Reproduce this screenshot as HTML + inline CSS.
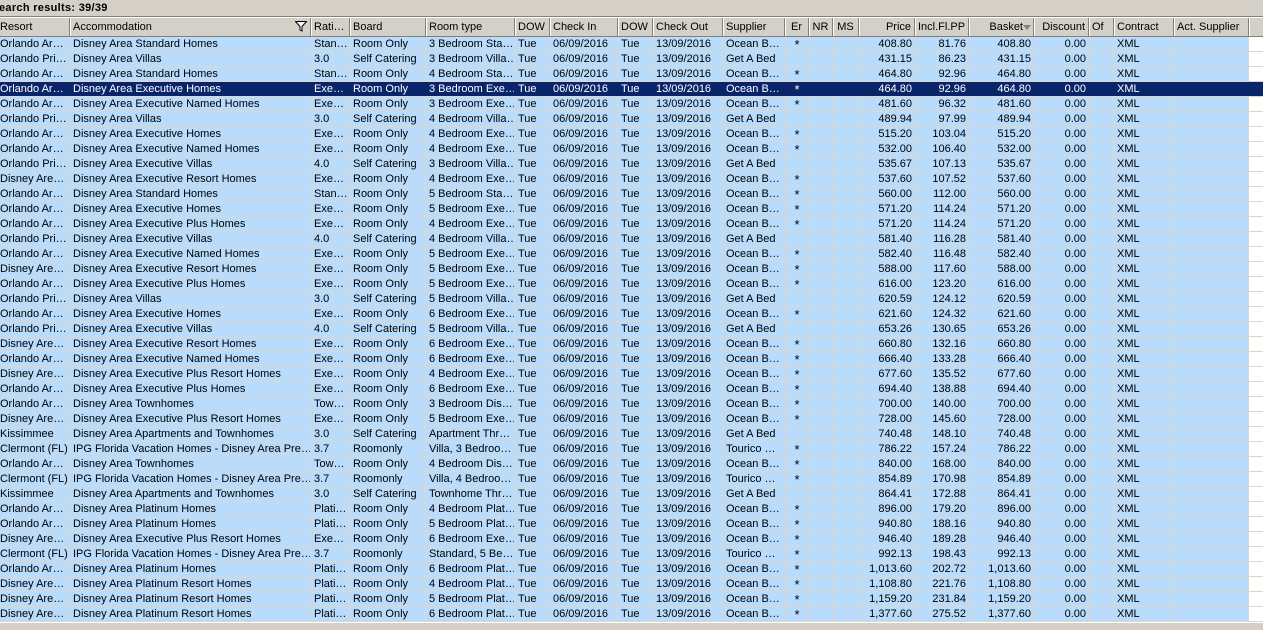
<!DOCTYPE html>
<html><head><meta charset="utf-8"><style>
*{margin:0;padding:0;box-sizing:border-box}
body{width:1263px;height:630px;background:#d4d0c8;font-family:"Liberation Sans","DejaVu Sans",sans-serif;font-size:11px;overflow:hidden;position:relative;color:#000}
.title{position:absolute;left:-1px;top:2px;font-weight:bold;font-size:11px;letter-spacing:0.3px}
.hline{position:absolute;left:0;top:16px;width:1263px;height:1px;background:#808080}
.hdr{position:absolute;left:0;top:17px;width:1263px;height:20px;background:#d4d0c8;border-top:1px solid #fff;border-bottom:1px solid #808080;display:flex}
.hdr div{height:18px;line-height:19px;border-right:1px solid #808080;box-shadow:inset 1px 0 0 #fff;padding:0 3px;white-space:nowrap;overflow:hidden;flex:none}
.grid{position:absolute;left:0;top:37px;width:1263px;background:#fff}
.r{display:flex;height:15px;border-bottom:1px solid #ddd6cc}
.r div{flex:none;height:14px;line-height:15px;border-right:1px solid #ddd6cc;padding:0 2px 0 3px;white-space:nowrap;overflow:hidden;background:#b9dcfc}
.r div.e{background:#fff;border-right:none;width:14px}
.r.s div{background:#0a246a;color:#fff;border-right-color:#0a246a}
.n{text-align:right}
.c{text-align:center;font-size:13px}
.bot{position:absolute;left:0;top:622px;width:1263px;height:1px;background:#fff}
</style></head><body>
<div class="title">earch results: 39/39</div>
<div class="hline"></div>
<div class="hdr">
<div style="width:70px;padding-left:0;box-shadow:none">Resort</div>
<div style="width:241px;position:relative">Accommodation<svg style="position:absolute;right:3px;top:3px" width="12" height="11" viewBox="0 0 12 11"><path d="M0.5 0.5H11.5L7 5.5V10L5 9V5.5Z" fill="#fff" stroke="#000" stroke-width="1"/></svg></div>
<div style="width:39px">Rati…</div>
<div style="width:76px">Board</div>
<div style="width:89px">Room type</div>
<div style="width:35px">DOW</div>
<div style="width:68px">Check In</div>
<div style="width:35px">DOW</div>
<div style="width:70px">Check Out</div>
<div style="width:62px">Supplier</div>
<div style="width:24px;text-align:center">Er</div>
<div style="width:24px;text-align:center">NR</div>
<div style="width:26px;text-align:center">MS</div>
<div style="width:56px;text-align:right">Price</div>
<div style="width:54px;text-align:right">Incl.Fl.PP</div>
<div style="width:65px;text-align:right;padding-right:10px;position:relative">Basket<span style="position:absolute;right:2px;top:7px;width:0;height:0;border-left:4px solid transparent;border-right:4px solid transparent;border-top:5px solid #808080"></span></div>
<div style="width:55px;text-align:right">Discount</div>
<div style="width:25px">Of</div>
<div style="width:60px">Contract</div>
<div style="width:75px">Act. Supplier</div>
<div style="width:14px;border-right:none"></div>
</div>
<div class="grid" id="g">
<div class="r"><div style="width:70px;padding-left:0">Orlando Ar…</div><div style="width:241px">Disney Area Standard Homes</div><div style="width:39px">Stan…</div><div style="width:76px">Room Only</div><div style="width:89px">3 Bedroom Sta…</div><div style="width:35px">Tue</div><div style="width:68px">06/09/2016</div><div style="width:35px">Tue</div><div style="width:70px">13/09/2016</div><div style="width:62px">Ocean B…</div><div class="c" style="width:24px">*</div><div style="width:24px"></div><div style="width:26px"></div><div class="n" style="width:56px">408.80</div><div class="n" style="width:54px">81.76</div><div class="n" style="width:65px">408.80</div><div class="n" style="width:55px">0.00</div><div style="width:25px"></div><div style="width:60px">XML</div><div style="width:75px"></div><div class="e"></div></div>
<div class="r"><div style="width:70px;padding-left:0">Orlando Pri…</div><div style="width:241px">Disney Area Villas</div><div style="width:39px">3.0</div><div style="width:76px">Self Catering</div><div style="width:89px">3 Bedroom Villa…</div><div style="width:35px">Tue</div><div style="width:68px">06/09/2016</div><div style="width:35px">Tue</div><div style="width:70px">13/09/2016</div><div style="width:62px">Get A Bed</div><div class="c" style="width:24px"></div><div style="width:24px"></div><div style="width:26px"></div><div class="n" style="width:56px">431.15</div><div class="n" style="width:54px">86.23</div><div class="n" style="width:65px">431.15</div><div class="n" style="width:55px">0.00</div><div style="width:25px"></div><div style="width:60px">XML</div><div style="width:75px"></div><div class="e"></div></div>
<div class="r"><div style="width:70px;padding-left:0">Orlando Ar…</div><div style="width:241px">Disney Area Standard Homes</div><div style="width:39px">Stan…</div><div style="width:76px">Room Only</div><div style="width:89px">4 Bedroom Sta…</div><div style="width:35px">Tue</div><div style="width:68px">06/09/2016</div><div style="width:35px">Tue</div><div style="width:70px">13/09/2016</div><div style="width:62px">Ocean B…</div><div class="c" style="width:24px">*</div><div style="width:24px"></div><div style="width:26px"></div><div class="n" style="width:56px">464.80</div><div class="n" style="width:54px">92.96</div><div class="n" style="width:65px">464.80</div><div class="n" style="width:55px">0.00</div><div style="width:25px"></div><div style="width:60px">XML</div><div style="width:75px"></div><div class="e"></div></div>
<div class="r s"><div style="width:70px;padding-left:0">Orlando Ar…</div><div style="width:241px">Disney Area Executive Homes</div><div style="width:39px">Exe…</div><div style="width:76px">Room Only</div><div style="width:89px">3 Bedroom Exe…</div><div style="width:35px">Tue</div><div style="width:68px">06/09/2016</div><div style="width:35px">Tue</div><div style="width:70px">13/09/2016</div><div style="width:62px">Ocean B…</div><div class="c" style="width:24px">*</div><div style="width:24px"></div><div style="width:26px"></div><div class="n" style="width:56px">464.80</div><div class="n" style="width:54px">92.96</div><div class="n" style="width:65px">464.80</div><div class="n" style="width:55px">0.00</div><div style="width:25px"></div><div style="width:60px">XML</div><div style="width:75px"></div><div class="e" style="background:#0a246a"></div></div>
<div class="r"><div style="width:70px;padding-left:0">Orlando Ar…</div><div style="width:241px">Disney Area Executive Named Homes</div><div style="width:39px">Exe…</div><div style="width:76px">Room Only</div><div style="width:89px">3 Bedroom Exe…</div><div style="width:35px">Tue</div><div style="width:68px">06/09/2016</div><div style="width:35px">Tue</div><div style="width:70px">13/09/2016</div><div style="width:62px">Ocean B…</div><div class="c" style="width:24px">*</div><div style="width:24px"></div><div style="width:26px"></div><div class="n" style="width:56px">481.60</div><div class="n" style="width:54px">96.32</div><div class="n" style="width:65px">481.60</div><div class="n" style="width:55px">0.00</div><div style="width:25px"></div><div style="width:60px">XML</div><div style="width:75px"></div><div class="e"></div></div>
<div class="r"><div style="width:70px;padding-left:0">Orlando Pri…</div><div style="width:241px">Disney Area Villas</div><div style="width:39px">3.0</div><div style="width:76px">Self Catering</div><div style="width:89px">4 Bedroom Villa…</div><div style="width:35px">Tue</div><div style="width:68px">06/09/2016</div><div style="width:35px">Tue</div><div style="width:70px">13/09/2016</div><div style="width:62px">Get A Bed</div><div class="c" style="width:24px"></div><div style="width:24px"></div><div style="width:26px"></div><div class="n" style="width:56px">489.94</div><div class="n" style="width:54px">97.99</div><div class="n" style="width:65px">489.94</div><div class="n" style="width:55px">0.00</div><div style="width:25px"></div><div style="width:60px">XML</div><div style="width:75px"></div><div class="e"></div></div>
<div class="r"><div style="width:70px;padding-left:0">Orlando Ar…</div><div style="width:241px">Disney Area Executive Homes</div><div style="width:39px">Exe…</div><div style="width:76px">Room Only</div><div style="width:89px">4 Bedroom Exe…</div><div style="width:35px">Tue</div><div style="width:68px">06/09/2016</div><div style="width:35px">Tue</div><div style="width:70px">13/09/2016</div><div style="width:62px">Ocean B…</div><div class="c" style="width:24px">*</div><div style="width:24px"></div><div style="width:26px"></div><div class="n" style="width:56px">515.20</div><div class="n" style="width:54px">103.04</div><div class="n" style="width:65px">515.20</div><div class="n" style="width:55px">0.00</div><div style="width:25px"></div><div style="width:60px">XML</div><div style="width:75px"></div><div class="e"></div></div>
<div class="r"><div style="width:70px;padding-left:0">Orlando Ar…</div><div style="width:241px">Disney Area Executive Named Homes</div><div style="width:39px">Exe…</div><div style="width:76px">Room Only</div><div style="width:89px">4 Bedroom Exe…</div><div style="width:35px">Tue</div><div style="width:68px">06/09/2016</div><div style="width:35px">Tue</div><div style="width:70px">13/09/2016</div><div style="width:62px">Ocean B…</div><div class="c" style="width:24px">*</div><div style="width:24px"></div><div style="width:26px"></div><div class="n" style="width:56px">532.00</div><div class="n" style="width:54px">106.40</div><div class="n" style="width:65px">532.00</div><div class="n" style="width:55px">0.00</div><div style="width:25px"></div><div style="width:60px">XML</div><div style="width:75px"></div><div class="e"></div></div>
<div class="r"><div style="width:70px;padding-left:0">Orlando Pri…</div><div style="width:241px">Disney Area Executive Villas</div><div style="width:39px">4.0</div><div style="width:76px">Self Catering</div><div style="width:89px">3 Bedroom Villa…</div><div style="width:35px">Tue</div><div style="width:68px">06/09/2016</div><div style="width:35px">Tue</div><div style="width:70px">13/09/2016</div><div style="width:62px">Get A Bed</div><div class="c" style="width:24px"></div><div style="width:24px"></div><div style="width:26px"></div><div class="n" style="width:56px">535.67</div><div class="n" style="width:54px">107.13</div><div class="n" style="width:65px">535.67</div><div class="n" style="width:55px">0.00</div><div style="width:25px"></div><div style="width:60px">XML</div><div style="width:75px"></div><div class="e"></div></div>
<div class="r"><div style="width:70px;padding-left:0">Disney Are…</div><div style="width:241px">Disney Area Executive Resort Homes</div><div style="width:39px">Exe…</div><div style="width:76px">Room Only</div><div style="width:89px">4 Bedroom Exe…</div><div style="width:35px">Tue</div><div style="width:68px">06/09/2016</div><div style="width:35px">Tue</div><div style="width:70px">13/09/2016</div><div style="width:62px">Ocean B…</div><div class="c" style="width:24px">*</div><div style="width:24px"></div><div style="width:26px"></div><div class="n" style="width:56px">537.60</div><div class="n" style="width:54px">107.52</div><div class="n" style="width:65px">537.60</div><div class="n" style="width:55px">0.00</div><div style="width:25px"></div><div style="width:60px">XML</div><div style="width:75px"></div><div class="e"></div></div>
<div class="r"><div style="width:70px;padding-left:0">Orlando Ar…</div><div style="width:241px">Disney Area Standard Homes</div><div style="width:39px">Stan…</div><div style="width:76px">Room Only</div><div style="width:89px">5 Bedroom Sta…</div><div style="width:35px">Tue</div><div style="width:68px">06/09/2016</div><div style="width:35px">Tue</div><div style="width:70px">13/09/2016</div><div style="width:62px">Ocean B…</div><div class="c" style="width:24px">*</div><div style="width:24px"></div><div style="width:26px"></div><div class="n" style="width:56px">560.00</div><div class="n" style="width:54px">112.00</div><div class="n" style="width:65px">560.00</div><div class="n" style="width:55px">0.00</div><div style="width:25px"></div><div style="width:60px">XML</div><div style="width:75px"></div><div class="e"></div></div>
<div class="r"><div style="width:70px;padding-left:0">Orlando Ar…</div><div style="width:241px">Disney Area Executive Homes</div><div style="width:39px">Exe…</div><div style="width:76px">Room Only</div><div style="width:89px">5 Bedroom Exe…</div><div style="width:35px">Tue</div><div style="width:68px">06/09/2016</div><div style="width:35px">Tue</div><div style="width:70px">13/09/2016</div><div style="width:62px">Ocean B…</div><div class="c" style="width:24px">*</div><div style="width:24px"></div><div style="width:26px"></div><div class="n" style="width:56px">571.20</div><div class="n" style="width:54px">114.24</div><div class="n" style="width:65px">571.20</div><div class="n" style="width:55px">0.00</div><div style="width:25px"></div><div style="width:60px">XML</div><div style="width:75px"></div><div class="e"></div></div>
<div class="r"><div style="width:70px;padding-left:0">Orlando Ar…</div><div style="width:241px">Disney Area Executive Plus Homes</div><div style="width:39px">Exe…</div><div style="width:76px">Room Only</div><div style="width:89px">4 Bedroom Exe…</div><div style="width:35px">Tue</div><div style="width:68px">06/09/2016</div><div style="width:35px">Tue</div><div style="width:70px">13/09/2016</div><div style="width:62px">Ocean B…</div><div class="c" style="width:24px">*</div><div style="width:24px"></div><div style="width:26px"></div><div class="n" style="width:56px">571.20</div><div class="n" style="width:54px">114.24</div><div class="n" style="width:65px">571.20</div><div class="n" style="width:55px">0.00</div><div style="width:25px"></div><div style="width:60px">XML</div><div style="width:75px"></div><div class="e"></div></div>
<div class="r"><div style="width:70px;padding-left:0">Orlando Pri…</div><div style="width:241px">Disney Area Executive Villas</div><div style="width:39px">4.0</div><div style="width:76px">Self Catering</div><div style="width:89px">4 Bedroom Villa…</div><div style="width:35px">Tue</div><div style="width:68px">06/09/2016</div><div style="width:35px">Tue</div><div style="width:70px">13/09/2016</div><div style="width:62px">Get A Bed</div><div class="c" style="width:24px"></div><div style="width:24px"></div><div style="width:26px"></div><div class="n" style="width:56px">581.40</div><div class="n" style="width:54px">116.28</div><div class="n" style="width:65px">581.40</div><div class="n" style="width:55px">0.00</div><div style="width:25px"></div><div style="width:60px">XML</div><div style="width:75px"></div><div class="e"></div></div>
<div class="r"><div style="width:70px;padding-left:0">Orlando Ar…</div><div style="width:241px">Disney Area Executive Named Homes</div><div style="width:39px">Exe…</div><div style="width:76px">Room Only</div><div style="width:89px">5 Bedroom Exe…</div><div style="width:35px">Tue</div><div style="width:68px">06/09/2016</div><div style="width:35px">Tue</div><div style="width:70px">13/09/2016</div><div style="width:62px">Ocean B…</div><div class="c" style="width:24px">*</div><div style="width:24px"></div><div style="width:26px"></div><div class="n" style="width:56px">582.40</div><div class="n" style="width:54px">116.48</div><div class="n" style="width:65px">582.40</div><div class="n" style="width:55px">0.00</div><div style="width:25px"></div><div style="width:60px">XML</div><div style="width:75px"></div><div class="e"></div></div>
<div class="r"><div style="width:70px;padding-left:0">Disney Are…</div><div style="width:241px">Disney Area Executive Resort Homes</div><div style="width:39px">Exe…</div><div style="width:76px">Room Only</div><div style="width:89px">5 Bedroom Exe…</div><div style="width:35px">Tue</div><div style="width:68px">06/09/2016</div><div style="width:35px">Tue</div><div style="width:70px">13/09/2016</div><div style="width:62px">Ocean B…</div><div class="c" style="width:24px">*</div><div style="width:24px"></div><div style="width:26px"></div><div class="n" style="width:56px">588.00</div><div class="n" style="width:54px">117.60</div><div class="n" style="width:65px">588.00</div><div class="n" style="width:55px">0.00</div><div style="width:25px"></div><div style="width:60px">XML</div><div style="width:75px"></div><div class="e"></div></div>
<div class="r"><div style="width:70px;padding-left:0">Orlando Ar…</div><div style="width:241px">Disney Area Executive Plus Homes</div><div style="width:39px">Exe…</div><div style="width:76px">Room Only</div><div style="width:89px">5 Bedroom Exe…</div><div style="width:35px">Tue</div><div style="width:68px">06/09/2016</div><div style="width:35px">Tue</div><div style="width:70px">13/09/2016</div><div style="width:62px">Ocean B…</div><div class="c" style="width:24px">*</div><div style="width:24px"></div><div style="width:26px"></div><div class="n" style="width:56px">616.00</div><div class="n" style="width:54px">123.20</div><div class="n" style="width:65px">616.00</div><div class="n" style="width:55px">0.00</div><div style="width:25px"></div><div style="width:60px">XML</div><div style="width:75px"></div><div class="e"></div></div>
<div class="r"><div style="width:70px;padding-left:0">Orlando Pri…</div><div style="width:241px">Disney Area Villas</div><div style="width:39px">3.0</div><div style="width:76px">Self Catering</div><div style="width:89px">5 Bedroom Villa…</div><div style="width:35px">Tue</div><div style="width:68px">06/09/2016</div><div style="width:35px">Tue</div><div style="width:70px">13/09/2016</div><div style="width:62px">Get A Bed</div><div class="c" style="width:24px"></div><div style="width:24px"></div><div style="width:26px"></div><div class="n" style="width:56px">620.59</div><div class="n" style="width:54px">124.12</div><div class="n" style="width:65px">620.59</div><div class="n" style="width:55px">0.00</div><div style="width:25px"></div><div style="width:60px">XML</div><div style="width:75px"></div><div class="e"></div></div>
<div class="r"><div style="width:70px;padding-left:0">Orlando Ar…</div><div style="width:241px">Disney Area Executive Homes</div><div style="width:39px">Exe…</div><div style="width:76px">Room Only</div><div style="width:89px">6 Bedroom Exe…</div><div style="width:35px">Tue</div><div style="width:68px">06/09/2016</div><div style="width:35px">Tue</div><div style="width:70px">13/09/2016</div><div style="width:62px">Ocean B…</div><div class="c" style="width:24px">*</div><div style="width:24px"></div><div style="width:26px"></div><div class="n" style="width:56px">621.60</div><div class="n" style="width:54px">124.32</div><div class="n" style="width:65px">621.60</div><div class="n" style="width:55px">0.00</div><div style="width:25px"></div><div style="width:60px">XML</div><div style="width:75px"></div><div class="e"></div></div>
<div class="r"><div style="width:70px;padding-left:0">Orlando Pri…</div><div style="width:241px">Disney Area Executive Villas</div><div style="width:39px">4.0</div><div style="width:76px">Self Catering</div><div style="width:89px">5 Bedroom Villa…</div><div style="width:35px">Tue</div><div style="width:68px">06/09/2016</div><div style="width:35px">Tue</div><div style="width:70px">13/09/2016</div><div style="width:62px">Get A Bed</div><div class="c" style="width:24px"></div><div style="width:24px"></div><div style="width:26px"></div><div class="n" style="width:56px">653.26</div><div class="n" style="width:54px">130.65</div><div class="n" style="width:65px">653.26</div><div class="n" style="width:55px">0.00</div><div style="width:25px"></div><div style="width:60px">XML</div><div style="width:75px"></div><div class="e"></div></div>
<div class="r"><div style="width:70px;padding-left:0">Disney Are…</div><div style="width:241px">Disney Area Executive Resort Homes</div><div style="width:39px">Exe…</div><div style="width:76px">Room Only</div><div style="width:89px">6 Bedroom Exe…</div><div style="width:35px">Tue</div><div style="width:68px">06/09/2016</div><div style="width:35px">Tue</div><div style="width:70px">13/09/2016</div><div style="width:62px">Ocean B…</div><div class="c" style="width:24px">*</div><div style="width:24px"></div><div style="width:26px"></div><div class="n" style="width:56px">660.80</div><div class="n" style="width:54px">132.16</div><div class="n" style="width:65px">660.80</div><div class="n" style="width:55px">0.00</div><div style="width:25px"></div><div style="width:60px">XML</div><div style="width:75px"></div><div class="e"></div></div>
<div class="r"><div style="width:70px;padding-left:0">Orlando Ar…</div><div style="width:241px">Disney Area Executive Named Homes</div><div style="width:39px">Exe…</div><div style="width:76px">Room Only</div><div style="width:89px">6 Bedroom Exe…</div><div style="width:35px">Tue</div><div style="width:68px">06/09/2016</div><div style="width:35px">Tue</div><div style="width:70px">13/09/2016</div><div style="width:62px">Ocean B…</div><div class="c" style="width:24px">*</div><div style="width:24px"></div><div style="width:26px"></div><div class="n" style="width:56px">666.40</div><div class="n" style="width:54px">133.28</div><div class="n" style="width:65px">666.40</div><div class="n" style="width:55px">0.00</div><div style="width:25px"></div><div style="width:60px">XML</div><div style="width:75px"></div><div class="e"></div></div>
<div class="r"><div style="width:70px;padding-left:0">Disney Are…</div><div style="width:241px">Disney Area Executive Plus Resort Homes</div><div style="width:39px">Exe…</div><div style="width:76px">Room Only</div><div style="width:89px">4 Bedroom Exe…</div><div style="width:35px">Tue</div><div style="width:68px">06/09/2016</div><div style="width:35px">Tue</div><div style="width:70px">13/09/2016</div><div style="width:62px">Ocean B…</div><div class="c" style="width:24px">*</div><div style="width:24px"></div><div style="width:26px"></div><div class="n" style="width:56px">677.60</div><div class="n" style="width:54px">135.52</div><div class="n" style="width:65px">677.60</div><div class="n" style="width:55px">0.00</div><div style="width:25px"></div><div style="width:60px">XML</div><div style="width:75px"></div><div class="e"></div></div>
<div class="r"><div style="width:70px;padding-left:0">Orlando Ar…</div><div style="width:241px">Disney Area Executive Plus Homes</div><div style="width:39px">Exe…</div><div style="width:76px">Room Only</div><div style="width:89px">6 Bedroom Exe…</div><div style="width:35px">Tue</div><div style="width:68px">06/09/2016</div><div style="width:35px">Tue</div><div style="width:70px">13/09/2016</div><div style="width:62px">Ocean B…</div><div class="c" style="width:24px">*</div><div style="width:24px"></div><div style="width:26px"></div><div class="n" style="width:56px">694.40</div><div class="n" style="width:54px">138.88</div><div class="n" style="width:65px">694.40</div><div class="n" style="width:55px">0.00</div><div style="width:25px"></div><div style="width:60px">XML</div><div style="width:75px"></div><div class="e"></div></div>
<div class="r"><div style="width:70px;padding-left:0">Orlando Ar…</div><div style="width:241px">Disney Area Townhomes</div><div style="width:39px">Tow…</div><div style="width:76px">Room Only</div><div style="width:89px">3 Bedroom Dis…</div><div style="width:35px">Tue</div><div style="width:68px">06/09/2016</div><div style="width:35px">Tue</div><div style="width:70px">13/09/2016</div><div style="width:62px">Ocean B…</div><div class="c" style="width:24px">*</div><div style="width:24px"></div><div style="width:26px"></div><div class="n" style="width:56px">700.00</div><div class="n" style="width:54px">140.00</div><div class="n" style="width:65px">700.00</div><div class="n" style="width:55px">0.00</div><div style="width:25px"></div><div style="width:60px">XML</div><div style="width:75px"></div><div class="e"></div></div>
<div class="r"><div style="width:70px;padding-left:0">Disney Are…</div><div style="width:241px">Disney Area Executive Plus Resort Homes</div><div style="width:39px">Exe…</div><div style="width:76px">Room Only</div><div style="width:89px">5 Bedroom Exe…</div><div style="width:35px">Tue</div><div style="width:68px">06/09/2016</div><div style="width:35px">Tue</div><div style="width:70px">13/09/2016</div><div style="width:62px">Ocean B…</div><div class="c" style="width:24px">*</div><div style="width:24px"></div><div style="width:26px"></div><div class="n" style="width:56px">728.00</div><div class="n" style="width:54px">145.60</div><div class="n" style="width:65px">728.00</div><div class="n" style="width:55px">0.00</div><div style="width:25px"></div><div style="width:60px">XML</div><div style="width:75px"></div><div class="e"></div></div>
<div class="r"><div style="width:70px;padding-left:0">Kissimmee</div><div style="width:241px">Disney Area Apartments and Townhomes</div><div style="width:39px">3.0</div><div style="width:76px">Self Catering</div><div style="width:89px">Apartment Thr…</div><div style="width:35px">Tue</div><div style="width:68px">06/09/2016</div><div style="width:35px">Tue</div><div style="width:70px">13/09/2016</div><div style="width:62px">Get A Bed</div><div class="c" style="width:24px"></div><div style="width:24px"></div><div style="width:26px"></div><div class="n" style="width:56px">740.48</div><div class="n" style="width:54px">148.10</div><div class="n" style="width:65px">740.48</div><div class="n" style="width:55px">0.00</div><div style="width:25px"></div><div style="width:60px">XML</div><div style="width:75px"></div><div class="e"></div></div>
<div class="r"><div style="width:70px;padding-left:0">Clermont (FL)</div><div style="width:241px">IPG Florida Vacation Homes - Disney Area Pre…</div><div style="width:39px">3.7</div><div style="width:76px">Roomonly</div><div style="width:89px">Villa, 3 Bedroo…</div><div style="width:35px">Tue</div><div style="width:68px">06/09/2016</div><div style="width:35px">Tue</div><div style="width:70px">13/09/2016</div><div style="width:62px">Tourico …</div><div class="c" style="width:24px">*</div><div style="width:24px"></div><div style="width:26px"></div><div class="n" style="width:56px">786.22</div><div class="n" style="width:54px">157.24</div><div class="n" style="width:65px">786.22</div><div class="n" style="width:55px">0.00</div><div style="width:25px"></div><div style="width:60px">XML</div><div style="width:75px"></div><div class="e"></div></div>
<div class="r"><div style="width:70px;padding-left:0">Orlando Ar…</div><div style="width:241px">Disney Area Townhomes</div><div style="width:39px">Tow…</div><div style="width:76px">Room Only</div><div style="width:89px">4 Bedroom Dis…</div><div style="width:35px">Tue</div><div style="width:68px">06/09/2016</div><div style="width:35px">Tue</div><div style="width:70px">13/09/2016</div><div style="width:62px">Ocean B…</div><div class="c" style="width:24px">*</div><div style="width:24px"></div><div style="width:26px"></div><div class="n" style="width:56px">840.00</div><div class="n" style="width:54px">168.00</div><div class="n" style="width:65px">840.00</div><div class="n" style="width:55px">0.00</div><div style="width:25px"></div><div style="width:60px">XML</div><div style="width:75px"></div><div class="e"></div></div>
<div class="r"><div style="width:70px;padding-left:0">Clermont (FL)</div><div style="width:241px">IPG Florida Vacation Homes - Disney Area Pre…</div><div style="width:39px">3.7</div><div style="width:76px">Roomonly</div><div style="width:89px">Villa, 4 Bedroo…</div><div style="width:35px">Tue</div><div style="width:68px">06/09/2016</div><div style="width:35px">Tue</div><div style="width:70px">13/09/2016</div><div style="width:62px">Tourico …</div><div class="c" style="width:24px">*</div><div style="width:24px"></div><div style="width:26px"></div><div class="n" style="width:56px">854.89</div><div class="n" style="width:54px">170.98</div><div class="n" style="width:65px">854.89</div><div class="n" style="width:55px">0.00</div><div style="width:25px"></div><div style="width:60px">XML</div><div style="width:75px"></div><div class="e"></div></div>
<div class="r"><div style="width:70px;padding-left:0">Kissimmee</div><div style="width:241px">Disney Area Apartments and Townhomes</div><div style="width:39px">3.0</div><div style="width:76px">Self Catering</div><div style="width:89px">Townhome Thr…</div><div style="width:35px">Tue</div><div style="width:68px">06/09/2016</div><div style="width:35px">Tue</div><div style="width:70px">13/09/2016</div><div style="width:62px">Get A Bed</div><div class="c" style="width:24px"></div><div style="width:24px"></div><div style="width:26px"></div><div class="n" style="width:56px">864.41</div><div class="n" style="width:54px">172.88</div><div class="n" style="width:65px">864.41</div><div class="n" style="width:55px">0.00</div><div style="width:25px"></div><div style="width:60px">XML</div><div style="width:75px"></div><div class="e"></div></div>
<div class="r"><div style="width:70px;padding-left:0">Orlando Ar…</div><div style="width:241px">Disney Area Platinum Homes</div><div style="width:39px">Plati…</div><div style="width:76px">Room Only</div><div style="width:89px">4 Bedroom Plat…</div><div style="width:35px">Tue</div><div style="width:68px">06/09/2016</div><div style="width:35px">Tue</div><div style="width:70px">13/09/2016</div><div style="width:62px">Ocean B…</div><div class="c" style="width:24px">*</div><div style="width:24px"></div><div style="width:26px"></div><div class="n" style="width:56px">896.00</div><div class="n" style="width:54px">179.20</div><div class="n" style="width:65px">896.00</div><div class="n" style="width:55px">0.00</div><div style="width:25px"></div><div style="width:60px">XML</div><div style="width:75px"></div><div class="e"></div></div>
<div class="r"><div style="width:70px;padding-left:0">Orlando Ar…</div><div style="width:241px">Disney Area Platinum Homes</div><div style="width:39px">Plati…</div><div style="width:76px">Room Only</div><div style="width:89px">5 Bedroom Plat…</div><div style="width:35px">Tue</div><div style="width:68px">06/09/2016</div><div style="width:35px">Tue</div><div style="width:70px">13/09/2016</div><div style="width:62px">Ocean B…</div><div class="c" style="width:24px">*</div><div style="width:24px"></div><div style="width:26px"></div><div class="n" style="width:56px">940.80</div><div class="n" style="width:54px">188.16</div><div class="n" style="width:65px">940.80</div><div class="n" style="width:55px">0.00</div><div style="width:25px"></div><div style="width:60px">XML</div><div style="width:75px"></div><div class="e"></div></div>
<div class="r"><div style="width:70px;padding-left:0">Disney Are…</div><div style="width:241px">Disney Area Executive Plus Resort Homes</div><div style="width:39px">Exe…</div><div style="width:76px">Room Only</div><div style="width:89px">6 Bedroom Exe…</div><div style="width:35px">Tue</div><div style="width:68px">06/09/2016</div><div style="width:35px">Tue</div><div style="width:70px">13/09/2016</div><div style="width:62px">Ocean B…</div><div class="c" style="width:24px">*</div><div style="width:24px"></div><div style="width:26px"></div><div class="n" style="width:56px">946.40</div><div class="n" style="width:54px">189.28</div><div class="n" style="width:65px">946.40</div><div class="n" style="width:55px">0.00</div><div style="width:25px"></div><div style="width:60px">XML</div><div style="width:75px"></div><div class="e"></div></div>
<div class="r"><div style="width:70px;padding-left:0">Clermont (FL)</div><div style="width:241px">IPG Florida Vacation Homes - Disney Area Pre…</div><div style="width:39px">3.7</div><div style="width:76px">Roomonly</div><div style="width:89px">Standard, 5 Be…</div><div style="width:35px">Tue</div><div style="width:68px">06/09/2016</div><div style="width:35px">Tue</div><div style="width:70px">13/09/2016</div><div style="width:62px">Tourico …</div><div class="c" style="width:24px">*</div><div style="width:24px"></div><div style="width:26px"></div><div class="n" style="width:56px">992.13</div><div class="n" style="width:54px">198.43</div><div class="n" style="width:65px">992.13</div><div class="n" style="width:55px">0.00</div><div style="width:25px"></div><div style="width:60px">XML</div><div style="width:75px"></div><div class="e"></div></div>
<div class="r"><div style="width:70px;padding-left:0">Orlando Ar…</div><div style="width:241px">Disney Area Platinum Homes</div><div style="width:39px">Plati…</div><div style="width:76px">Room Only</div><div style="width:89px">6 Bedroom Plat…</div><div style="width:35px">Tue</div><div style="width:68px">06/09/2016</div><div style="width:35px">Tue</div><div style="width:70px">13/09/2016</div><div style="width:62px">Ocean B…</div><div class="c" style="width:24px">*</div><div style="width:24px"></div><div style="width:26px"></div><div class="n" style="width:56px">1,013.60</div><div class="n" style="width:54px">202.72</div><div class="n" style="width:65px">1,013.60</div><div class="n" style="width:55px">0.00</div><div style="width:25px"></div><div style="width:60px">XML</div><div style="width:75px"></div><div class="e"></div></div>
<div class="r"><div style="width:70px;padding-left:0">Disney Are…</div><div style="width:241px">Disney Area Platinum Resort Homes</div><div style="width:39px">Plati…</div><div style="width:76px">Room Only</div><div style="width:89px">4 Bedroom Plat…</div><div style="width:35px">Tue</div><div style="width:68px">06/09/2016</div><div style="width:35px">Tue</div><div style="width:70px">13/09/2016</div><div style="width:62px">Ocean B…</div><div class="c" style="width:24px">*</div><div style="width:24px"></div><div style="width:26px"></div><div class="n" style="width:56px">1,108.80</div><div class="n" style="width:54px">221.76</div><div class="n" style="width:65px">1,108.80</div><div class="n" style="width:55px">0.00</div><div style="width:25px"></div><div style="width:60px">XML</div><div style="width:75px"></div><div class="e"></div></div>
<div class="r"><div style="width:70px;padding-left:0">Disney Are…</div><div style="width:241px">Disney Area Platinum Resort Homes</div><div style="width:39px">Plati…</div><div style="width:76px">Room Only</div><div style="width:89px">5 Bedroom Plat…</div><div style="width:35px">Tue</div><div style="width:68px">06/09/2016</div><div style="width:35px">Tue</div><div style="width:70px">13/09/2016</div><div style="width:62px">Ocean B…</div><div class="c" style="width:24px">*</div><div style="width:24px"></div><div style="width:26px"></div><div class="n" style="width:56px">1,159.20</div><div class="n" style="width:54px">231.84</div><div class="n" style="width:65px">1,159.20</div><div class="n" style="width:55px">0.00</div><div style="width:25px"></div><div style="width:60px">XML</div><div style="width:75px"></div><div class="e"></div></div>
<div class="r"><div style="width:70px;padding-left:0">Disney Are…</div><div style="width:241px">Disney Area Platinum Resort Homes</div><div style="width:39px">Plati…</div><div style="width:76px">Room Only</div><div style="width:89px">6 Bedroom Plat…</div><div style="width:35px">Tue</div><div style="width:68px">06/09/2016</div><div style="width:35px">Tue</div><div style="width:70px">13/09/2016</div><div style="width:62px">Ocean B…</div><div class="c" style="width:24px">*</div><div style="width:24px"></div><div style="width:26px"></div><div class="n" style="width:56px">1,377.60</div><div class="n" style="width:54px">275.52</div><div class="n" style="width:65px">1,377.60</div><div class="n" style="width:55px">0.00</div><div style="width:25px"></div><div style="width:60px">XML</div><div style="width:75px"></div><div class="e"></div></div>
</div>
<div class="bot"></div>
</body></html>
